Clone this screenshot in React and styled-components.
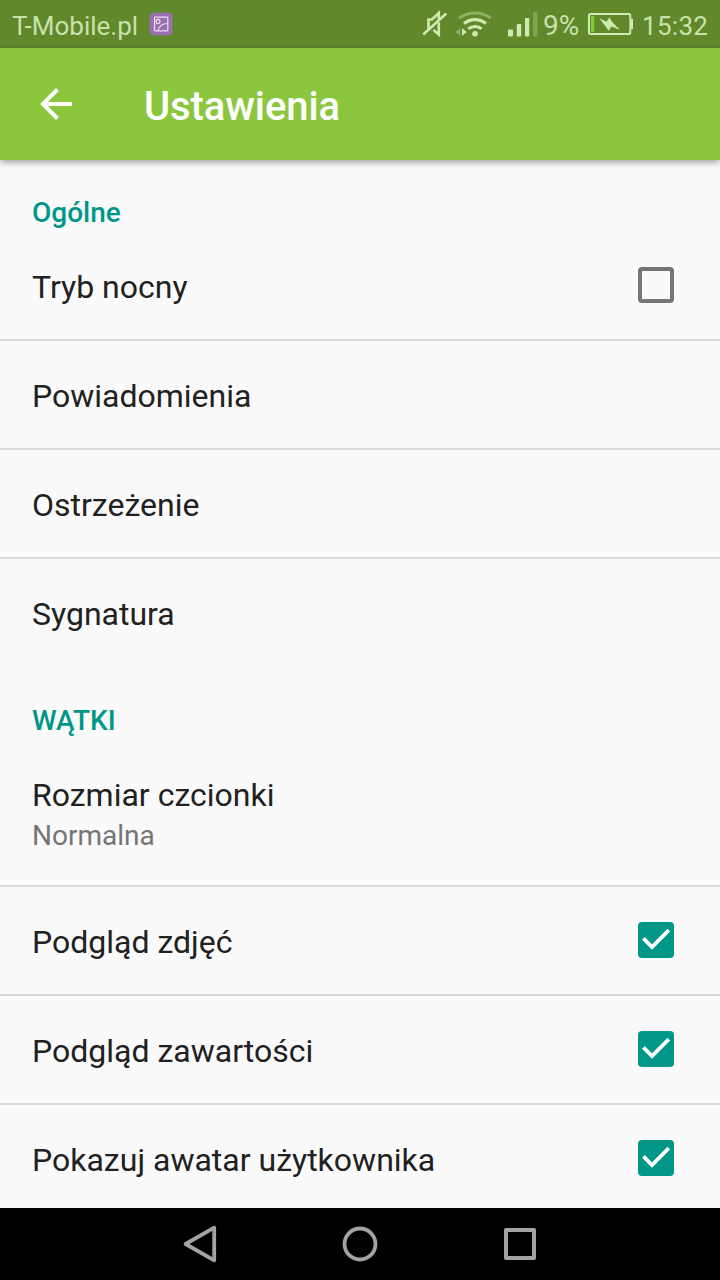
import styled, { createGlobalStyle } from 'styled-components';
import { useState } from 'react';

const App = ()=>{

    const [settings,setSettings]=useState({night:false,photos:true,content:true,avatar:true});
    const toggle = (name)=>{
        setSettings({...settings,[name]:!settings[name]});
    };

    return(
        <>
        <GlobalStyle/>
        <Screen>
          <StatusBar>
              <StatusText $gap='9px' $width='128px'>T-Mobile.pl</StatusText>
              <PhotoIcon/>
              <Spacer/>
              <StatusIcons/>
              <StatusText $gap='8px' $width='37px' $size='28px'>9%</StatusText>
              <BatteryIcon/>
              <StatusText $gap='0' $width='67px' $spacing='0.3px'>15:32</StatusText>
          </StatusBar>
          <AppBar>
              <BackButton aria-label="Wstecz">
                  <svg width="32" height="32" viewBox="0 0 32 32" fill="none" stroke="#fff" strokeWidth="4">
                      <path d="M32 16H4M17.5 1.5L3 16L17.5 30.5"/>
                  </svg>
              </BackButton>
              <Title>Ustawienia</Title>
          </AppBar>
          <Content>
              <SectionTitle>Ogólne</SectionTitle>
              <CheckRow label="Tryb nocny" checked={settings.night} onClick={()=>toggle('night')}/>
              <Row><Label>Powiadomienia</Label></Row>
              <Row><Label>Ostrzeżenie</Label></Row>
              <Row $last><Label>Sygnatura</Label></Row>
              <SectionTitle>WĄTKI</SectionTitle>
              <Row $tall>
                  <div>
                      <Label>Rozmiar czcionki</Label>
                      <Summary>Normalna</Summary>
                  </div>
              </Row>
              <CheckRow label="Podgląd zdjęć" checked={settings.photos} onClick={()=>toggle('photos')}/>
              <CheckRow label="Podgląd zawartości" checked={settings.content} onClick={()=>toggle('content')}/>
              <CheckRow label="Pokazuj awatar użytkownika" checked={settings.avatar} onClick={()=>toggle('avatar')}/>
          </Content>
          <NavBar>
              <svg width="36" height="40" viewBox="0 0 36 40" fill="none" stroke="#a3a3a3" strokeWidth="3.8" strokeLinejoin="round">
                  <path d="M32.2 3.7V36.3L3.6 20Z"/>
              </svg>
              <svg width="36" height="36" viewBox="0 0 36 36" fill="none" stroke="#a3a3a3" strokeWidth="3.8">
                  <circle cx="18" cy="18" r="15.5"/>
              </svg>
              <svg width="36" height="36" viewBox="0 0 36 36" fill="none" stroke="#a3a3a3" strokeWidth="4" strokeLinejoin="round">
                  <path d="M4 4H32V32H4Z"/>
              </svg>
          </NavBar>
        </Screen>
        </>
    )
}

const CheckRow = ({label,checked,onClick})=>(
    <Row onClick={onClick}>
        <Label>{label}</Label>
        <Box role="checkbox" aria-checked={checked} $checked={checked}>
            {checked && <svg width="36" height="36" viewBox="0 0 36 36" fill="none" stroke="#fff" strokeWidth="3.8">
                <path d="M5.4 16.4L14 25L30.8 8.2"/>
            </svg>}
        </Box>
    </Row>
)

const PhotoIcon = ()=>(
    <svg width="24" height="24" viewBox="0 0 24 24" fill="none" stroke="#ecd9f3" strokeWidth="1.2">
        <rect x="0.5" y="0.5" width="23" height="23" rx="4.5" fill="#9871ae" stroke="none"/>
        <rect x="5.5" y="5.2" width="13.3" height="13.6" rx="0.5"/>
        <ellipse cx="9" cy="9.4" rx="1.9" ry="2.1"/>
        <path d="M9 18.5C9.5 14.5 13.5 11.5 18.5 11.5"/>
    </svg>
)

// mute, wifi and signal strength
const StatusIcons = ()=>(
    <svg width="123" height="48" viewBox="420 0 123 48" fill="none" stroke="#cfeab0">
        <path d="M431 28.3H428.5V19.5H432L438.8 13V19.5M438.8 22.5V34.5L433.5 30" strokeWidth="2.6"/>
        <path d="M423.2 34.5L446.3 13.5" strokeWidth="2.6"/>
        <path d="M459.2 18.2C468 11.2 482 11.2 490.8 18.2" stroke="#8eb365" strokeWidth="3"/>
        <path d="M464 23.6C470.5 18.2 479.5 18.2 486 23.6" strokeWidth="3.2"/>
        <path d="M468.3 28.8C472.2 25.6 477.8 25.6 481.7 28.8" strokeWidth="3"/>
        <circle cx="475" cy="33.8" r="2.8" fill="#cfeab0" stroke="none"/>
        <path d="M460.2 28V36L455.4 32Z" fill="#8eb365" stroke="none"/>
        <path d="M462 28V36L466.6 32Z" fill="#cfeab0" stroke="none"/>
        <rect x="508" y="29.5" width="5" height="7" rx="1" fill="#cfeab0" stroke="none"/>
        <rect x="516.8" y="24" width="4.4" height="12.5" rx="0.8" fill="#cfeab0" stroke="none"/>
        <rect x="525" y="18" width="4.2" height="18.5" rx="0.8" fill="#cfeab0" stroke="none"/>
        <rect x="533" y="12" width="4.4" height="24.5" rx="0.8" fill="#7fa655" stroke="none"/>
    </svg>
)

const BatteryIcon = ()=>(
    <BatterySvg width="46" height="24" viewBox="0 0 46 24" fill="none" stroke="#cfeab0">
        <rect x="1" y="2" width="41.3" height="20" rx="1.5" strokeWidth="2"/>
        <path d="M42.5 7H45V17H42.5Z" fill="#cfeab0" stroke="none"/>
        <rect x="3" y="4" width="3.2" height="16" fill="#7fcb33" stroke="none"/>
        <path d="M11.3 6.3L18.6 9.8L21.5 5.3L24 9.8L32 18L23.5 14.5L20.8 18.8Z" fill="#cfeab0" stroke="none"/>
    </BatterySvg>
)

const GlobalStyle = createGlobalStyle`
    *{
        box-sizing:border-box;
    }
    body{
        margin:0;
        font-family:Roboto,sans-serif;
        background:#fafafa;
    }
    svg{
        display:block;
        flex-shrink:0;
    }
`
const Screen = styled.div`
    width:720px;
    height:1280px;
    display:flex;
    flex-direction:column;
    overflow:hidden;
    background:#fafafa;
`
const StatusBar = styled.div`
    height:48px;
    flex-shrink:0;
    display:flex;
    align-items:center;
    padding:0 11px 0 12px;
    background:#60892b;
`
const StatusText = styled.span`
    width:${props=>props.$width};
    margin-right:${props=>props.$gap};
    padding-top:3px;
    font-size:${props=>props.$size || '26px'};
    letter-spacing:${props=>props.$spacing || 'normal'};
    line-height:32px;
    white-space:nowrap;
    color:#c8e2ab;
`
const Spacer = styled.div`
    flex:1;
`
const BatterySvg = styled.svg`
    margin-right:8px;
`
const AppBar = styled.header`
    height:112px;
    flex-shrink:0;
    display:flex;
    align-items:center;
    padding:0 40px;
    background:#8ac73e;
    box-shadow:0 2px 7px rgba(0,0,0,0.4);
    z-index:1;
`
const BackButton = styled.button`
    border:none;
    background:none;
    padding:0;
    margin-right:72px;
`
const Title = styled.h1`
    margin:0;
    padding-top:6px;
    font-size:40px;
    letter-spacing:-0.1px;
    line-height:48px;
    font-weight:500;
    color:#fff;
`
const Content = styled.main`
    flex:1;
    min-height:0;
    overflow:hidden;
`
const SectionTitle = styled.h2`
    height:72px;
    margin:0;
    padding:36px 32px 0;
    font-size:28px;
    line-height:34px;
    font-weight:500;
    color:#009688;
`
const Row = styled.div`
    height:${props=>props.$tall ? '147px' : '109px'};
    display:flex;
    align-items:center;
    justify-content:space-between;
    padding:0 46px 0 32px;
    border-bottom:2px solid ${props=>props.$last ? 'transparent' : '#dadada'};
`
const Label = styled.div`
    padding-top:3px;
    font-size:32px;
    line-height:38px;
    color:#212121;
`
const Summary = styled.div`
    padding-top:5px;
    font-size:28px;
    line-height:34px;
    color:#757575;
`
const Box = styled.div`
    width:36px;
    height:36px;
    margin-bottom:1px;
    border:${props=>props.$checked ? 'none' : '4px solid #757575'};
    border-radius:4px;
    background:${props=>props.$checked ? '#009688' : 'transparent'};
`
const NavBar = styled.nav`
    height:72px;
    flex-shrink:0;
    display:flex;
    align-items:center;
    justify-content:center;
    gap:124px;
    background:#000;
`

export default App;
